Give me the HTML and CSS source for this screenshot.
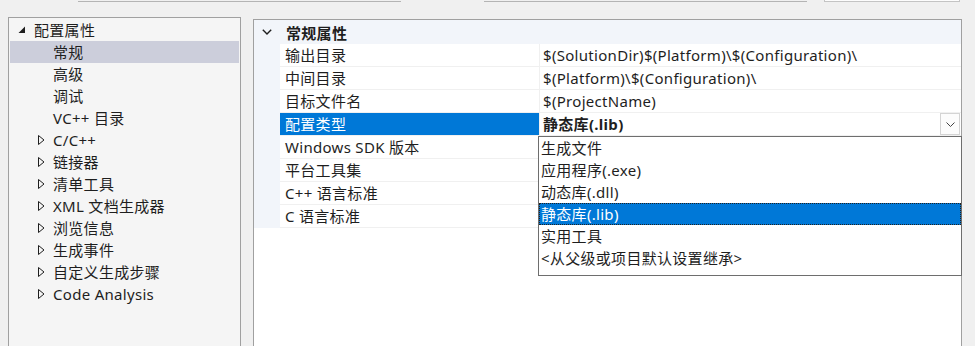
FILE: index.html
```html
<!DOCTYPE html>
<html lang="zh-CN">
<head>
    <meta charset="UTF-8">
    <title>配置属性</title>
    <link rel="stylesheet" href="styles.css">
</head>
<body>
    <div class="toolbar">
        <div class="stub stub-config"></div>
        <div class="stub stub-platform"></div>
        <div class="stub stub-button"></div>
    </div>

    <div class="main">
        <div class="tree">
            <div class="node level-0">
                <span class="toggle">
                    <svg width="8" height="8" viewBox="0 0 8 8"><polygon points="7,0.5 7,7 0.5,7" fill="#1e1e1e"/></svg>
                </span>
                配置属性
            </div>
            <div class="node level-1 selected"><span class="toggle"></span>常规</div>
            <div class="node level-1"><span class="toggle"></span>高级</div>
            <div class="node level-1"><span class="toggle"></span>调试</div>
            <div class="node level-1"><span class="toggle"></span>VC++ 目录</div>
            <div class="node level-1"><span class="toggle"><svg class="collapsed" width="7" height="10" viewBox="0 0 7 10"><polygon points="0.5,0.5 6,5 0.5,9.5" fill="none" stroke="#1e1e1e"/></svg></span>C/C++</div>
            <div class="node level-1"><span class="toggle"><svg class="collapsed" width="7" height="10" viewBox="0 0 7 10"><polygon points="0.5,0.5 6,5 0.5,9.5" fill="none" stroke="#1e1e1e"/></svg></span>链接器</div>
            <div class="node level-1"><span class="toggle"><svg class="collapsed" width="7" height="10" viewBox="0 0 7 10"><polygon points="0.5,0.5 6,5 0.5,9.5" fill="none" stroke="#1e1e1e"/></svg></span>清单工具</div>
            <div class="node level-1"><span class="toggle"><svg class="collapsed" width="7" height="10" viewBox="0 0 7 10"><polygon points="0.5,0.5 6,5 0.5,9.5" fill="none" stroke="#1e1e1e"/></svg></span>XML 文档生成器</div>
            <div class="node level-1"><span class="toggle"><svg class="collapsed" width="7" height="10" viewBox="0 0 7 10"><polygon points="0.5,0.5 6,5 0.5,9.5" fill="none" stroke="#1e1e1e"/></svg></span>浏览信息</div>
            <div class="node level-1"><span class="toggle"><svg class="collapsed" width="7" height="10" viewBox="0 0 7 10"><polygon points="0.5,0.5 6,5 0.5,9.5" fill="none" stroke="#1e1e1e"/></svg></span>生成事件</div>
            <div class="node level-1"><span class="toggle"><svg class="collapsed" width="7" height="10" viewBox="0 0 7 10"><polygon points="0.5,0.5 6,5 0.5,9.5" fill="none" stroke="#1e1e1e"/></svg></span>自定义生成步骤</div>
            <div class="node level-1"><span class="toggle"><svg class="collapsed" width="7" height="10" viewBox="0 0 7 10"><polygon points="0.5,0.5 6,5 0.5,9.5" fill="none" stroke="#1e1e1e"/></svg></span>Code Analysis</div>
        </div>

        <div class="grid-panel">
            <div class="category">
                <span class="cat-toggle">
                    <svg width="10" height="6" viewBox="0 0 10 6"><polyline points="0.8,0.8 5,5 9.2,0.8" fill="none" stroke="#1e1e1e" stroke-width="1.4"/></svg>
                </span>
                <span class="cat-name">常规属性</span>
            </div>

            <div class="prop">
                <div class="gutter"></div>
                <div class="name">输出目录</div>
                <div class="value">$(SolutionDir)$(Platform)\$(Configuration)\</div>
            </div>
            <div class="prop">
                <div class="gutter"></div>
                <div class="name">中间目录</div>
                <div class="value">$(Platform)\$(Configuration)\</div>
            </div>
            <div class="prop">
                <div class="gutter"></div>
                <div class="name">目标文件名</div>
                <div class="value">$(ProjectName)</div>
            </div>
            <div class="prop active">
                <div class="gutter"></div>
                <div class="name">配置类型</div>
                <div class="value editing">
                    <span class="current">静态库(.lib)</span>
                    <span class="drop-btn">
                        <svg width="9" height="5" viewBox="0 0 9 5"><polyline points="0.5,0.5 4.5,4.5 8.5,0.5" fill="none" stroke="#444" stroke-width="1"/></svg>
                    </span>
                    <ul class="options">
                        <li>生成文件</li>
                        <li>应用程序(.exe)</li>
                        <li>动态库(.dll)</li>
                        <li class="picked">静态库(.lib)</li>
                        <li>实用工具</li>
                        <li>&lt;从父级或项目默认设置继承&gt;</li>
                    </ul>
                </div>
            </div>
            <div class="prop">
                <div class="gutter"></div>
                <div class="name">Windows SDK 版本</div>
                <div class="value"></div>
            </div>
            <div class="prop">
                <div class="gutter"></div>
                <div class="name">平台工具集</div>
                <div class="value"></div>
            </div>
            <div class="prop">
                <div class="gutter"></div>
                <div class="name">C++ 语言标准</div>
                <div class="value"></div>
            </div>
            <div class="prop">
                <div class="gutter"></div>
                <div class="name">C 语言标准</div>
                <div class="value"></div>
            </div>
        </div>
    </div>
</body>
</html>
```

FILE: styles.css
```css
body {
    margin: 0;
    padding: 0;
    width: 975px;
    height: 346px;
    overflow: hidden;
    background-color: #f0f0f0;
    color: #1e1e1e;
    font-family: "Noto Sans", "Noto Sans CJK SC", sans-serif;
    font-size: 15px;
    letter-spacing: 0.3px;
}

/* bottoms of the combo boxes scrolled off the top */
.toolbar {
    display: flex;
    height: 2px;
}

.stub {
    height: 1px;
    border-bottom: 1px solid #b4b4b4;
}

.stub-config {
    margin-left: 78px;
    width: 323px;
}

.stub-platform {
    margin-left: 83px;
    width: 323px;
}

.stub-button {
    margin-left: 17px;
    width: 134px;
    background-color: #fdfdfd;
    border-left: 1px solid #c4c4c4;
    border-right: 1px solid #c4c4c4;
    border-bottom-color: #c4c4c4;
}

.main {
    display: flex;
    align-items: flex-start;
    margin-top: 15px;
}

/* left tree */
.tree {
    margin-left: 8px;
    width: 233px;
    height: 340px;
    padding: 1px;
    padding-top: 1px;
    box-sizing: border-box;
    border: 1px solid #a0a0a0;
    background-color: #f5f5f5;
}

.node {
    display: flex;
    align-items: center;
    height: 22px;
    line-height: 22px;
    white-space: nowrap;
}

.node.level-0 {
    padding-left: 6px;
}

.node.level-1 {
    padding-left: 25px;
}

.node.selected {
    background-color: #cccedb;
}

.toggle {
    display: flex;
    align-items: center;
    width: 18px;
    height: 22px;
    padding-left: 2px;
    box-sizing: border-box;
}

.toggle .collapsed {
    margin-left: 1px;
}

/* right property grid */
.grid-panel {
    margin-left: 12px;
    margin-top: 2px;
    width: 709px;
    height: 340px;
    box-sizing: border-box;
    border: 1px solid #a0a0a0;
    background-color: #fff;
}

.category {
    display: flex;
    align-items: center;
    height: 24px;
    background-color: #f2f5fa;
}

.cat-toggle {
    display: flex;
    justify-content: center;
    width: 26px;
}

.cat-name {
    padding-left: 6px;
    font-weight: bold;
}

.prop {
    display: grid;
    grid-template-columns: 26px 259px 422px;
    height: 23px;
}

.prop .gutter {
    background-color: #f2f5fa;
}

.prop .name,
.prop .value {
    height: 22px;
    line-height: 22px;
    border-bottom: 1px solid #f0f0f0;
    white-space: nowrap;
}

.prop .name {
    padding-left: 5px;
}

.prop .value {
    padding-left: 3px;
    border-left: 1px solid #f0f0f0;
}

.prop.active .name {
    background-color: #0078d7;
    color: #fff;
}

.value.editing {
    position: relative;
    display: flex;
    align-items: center;
}

.value.editing .current {
    font-weight: bold;
}

.drop-btn {
    display: flex;
    align-items: center;
    justify-content: center;
    margin-left: auto;
    margin-right: 1px;
    width: 18px;
    height: 20px;
    border: 1px solid #d4d4d4;
    background-color: #fcfcfc;
}

.options {
    position: absolute;
    top: 23px;
    left: -2px;
    width: 424px;
    margin: 0;
    padding: 0 0 6px 0;
    list-style: none;
    box-sizing: border-box;
    border: 1px solid #6e6e6e;
    background-color: #fff;
    z-index: 2;
}

.options li {
    height: 22px;
    line-height: 22px;
    padding-left: 2px;
    font-weight: normal;
}

.options li.picked {
    background-color: #0078d7;
    color: #fff;
    outline: 1px dotted #222;
    outline-offset: -1px;
}
```
